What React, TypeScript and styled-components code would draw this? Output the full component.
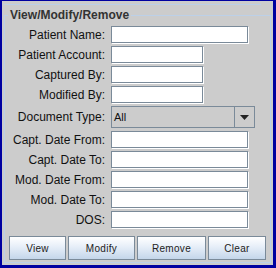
import styled, { createGlobalStyle } from "styled-components";

const GlobalStyle = createGlobalStyle`
  html, body {
    margin: 0;
    padding: 0;
    background: #cccccc;
  }
  * {
    box-sizing: border-box;
  }
`;

const fields = [
  { label: "Patient Name:", size: "wide" },
  { label: "Patient Account:", size: "short" },
  { label: "Captured By:", size: "short" },
  { label: "Modified By:", size: "short" },
  { label: "Document Type:", size: "combo" },
  { label: "Capt. Date From:", size: "wide" },
  { label: "Capt. Date To:", size: "wide" },
  { label: "Mod. Date From:", size: "wide" },
  { label: "Mod. Date To:", size: "wide" },
  { label: "DOS:", size: "wide" },
];

const buttons = [
  { text: "View", width: 57 },
  { text: "Modify", width: 67 },
  { text: "Remove", width: 69 },
  { text: "Clear", width: 58 },
];

const App = () => {
  return (
    <Frame>
      <GlobalStyle />
      <TopRule />
      <Group>
        <Title>View/Modify/Remove</Title>
        <Form>
          {fields.map((f) =>
            f.size === "combo" ? (
              <Row key={f.label}>
                <Label>{f.label}</Label>
                <Combo>
                  <ComboText>All</ComboText>
                  <ComboArrow>
                    <svg width="9" height="5" viewBox="0 0 9 5">
                      <path d="M0 0H9L4.5 5Z" fill="#222" />
                    </svg>
                  </ComboArrow>
                </Combo>
              </Row>
            ) : (
              <Row key={f.label}>
                <Label>{f.label}</Label>
                <Field $wide={f.size === "wide"} />
              </Row>
            )
          )}
        </Form>
        <ButtonBar>
          {buttons.map((b) => (
            <Button key={b.text} $width={b.width}>
              {b.text}
            </Button>
          ))}
        </ButtonBar>
      </Group>
    </Frame>
  );
};

const Frame = styled.div`
  width: 276px;
  height: 268px;
  background: #cccccc;
  border-style: solid;
  border-color: #0000a0;
  border-width: 1px 3px 3px 2px;
  padding: 3px 2px 2px 2px;
  display: flex;
  flex-direction: column;
  font-family: "Liberation Sans", Arial, sans-serif;
`;

const TopRule = styled.div`
  height: 1px;
  margin-right: 10px;
  background: #bcd0e8;
`;

const Group = styled.fieldset`
  margin: 3px 0 0 0;
  padding: 0 0 2px 0;
  min-width: 0;
  flex: 1;
  border: 1px solid #bcd0e8;
`;

const Title = styled.legend`
  margin-left: 3px;
  padding: 0 2px;
  font-size: 12px;
  line-height: 14px;
  font-weight: bold;
  color: #333333;
`;

const Form = styled.div`
  margin-top: 4px;
  display: flex;
  flex-direction: column;
  gap: 3px;
`;

const Row = styled.div`
  display: grid;
  grid-template-columns: 100px auto;
  column-gap: 6px;
  align-items: center;
`;

const Label = styled.div`
  text-align: right;
  font-size: 12px;
  color: #111111;
  white-space: nowrap;
`;

const Field = styled.div<{ $wide: boolean }>`
  width: ${(p) => (p.$wide ? "137px" : "92px")};
  height: 17px;
  background: #ffffff;
  border: 1px solid #7a8a99;
  box-shadow: 1px 1px 0 #ffffff;
`;

const Combo = styled.div`
  width: 144px;
  height: 22px;
  display: flex;
  border: 1px solid #7a8a99;
  background: #cccccc;
`;

const ComboText = styled.div`
  flex: 1;
  padding-left: 2px;
  font-size: 11px;
  line-height: 20px;
  color: #111111;
`;

const ComboArrow = styled.div`
  width: 20px;
  border-left: 1px solid #7a8a99;
  display: flex;
  align-items: center;
  justify-content: center;
`;

const ButtonBar = styled.div`
  margin-top: 8px;
  padding-left: 4px;
  display: flex;
  gap: 2px;
`;

const Button = styled.div<{ $width: number }>`
  width: ${(p) => p.$width}px;
  height: 24px;
  display: flex;
  align-items: center;
  justify-content: center;
  border: 1px solid #7a8a99;
  background: linear-gradient(to bottom, #ffffff 0%, #e6eef8 45%, #c4d6ea 100%);
  font-size: 10px;
  letter-spacing: 0.3px;
  color: #222222;
`;

export default App;
